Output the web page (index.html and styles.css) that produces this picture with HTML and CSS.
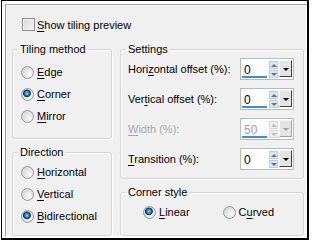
FILE: index.html
```html
<!DOCTYPE html>
<html lang="en">
<head>
    <meta charset="UTF-8">
    <title>Tiling</title>
    <link rel="stylesheet" href="styles.css">
</head>
<body>
    <div class="dialog">
        <div class="panel">
            <div class="check"><span class="box"></span><span><u>S</u>how tiling preview</span></div>

            <div class="columns">
                <div class="col">
                    <fieldset class="group tiling">
                        <legend>Tiling method</legend>
                        <div class="options">
                            <div class="radio"><span class="dot"></span><span><u>E</u>dge</span></div>
                            <div class="radio"><span class="dot on"></span><span><u>C</u>orner</span></div>
                            <div class="radio"><span class="dot"></span><span><u>M</u>irror</span></div>
                        </div>
                    </fieldset>
                    <fieldset class="group direction">
                        <legend>Direction</legend>
                        <div class="options">
                            <div class="radio"><span class="dot"></span><span><u>H</u>orizontal</span></div>
                            <div class="radio"><span class="dot"></span><span><u>V</u>ertical</span></div>
                            <div class="radio"><span class="dot on"></span><span><u>B</u>idirectional</span></div>
                        </div>
                    </fieldset>
                </div>

                <div class="col">
                    <fieldset class="group settings">
                        <legend>Settings</legend>
                        <div class="rows">
                            <div class="row">
                                <span>Hori<u>z</u>ontal offset (%):</span>
                                <div class="spin">
                                    <div class="field">0<span class="bar"></span></div>
                                    <div class="arrows"><span class="up"></span><span class="down"></span></div>
                                    <div class="drop"></div>
                                </div>
                            </div>
                            <div class="row">
                                <span>Ver<u>t</u>ical offset (%):</span>
                                <div class="spin">
                                    <div class="field">0<span class="bar"></span></div>
                                    <div class="arrows"><span class="up"></span><span class="down"></span></div>
                                    <div class="drop"></div>
                                </div>
                            </div>
                            <div class="row disabled">
                                <span><u>W</u>idth (%):</span>
                                <div class="spin">
                                    <div class="field">50<span class="bar"></span></div>
                                    <div class="arrows"><span class="up"></span><span class="down"></span></div>
                                    <div class="drop"></div>
                                </div>
                            </div>
                            <div class="row">
                                <span><u>T</u>ransition (%):</span>
                                <div class="spin">
                                    <div class="field">0</div>
                                    <div class="arrows"><span class="up"></span><span class="down"></span></div>
                                    <div class="drop"></div>
                                </div>
                            </div>
                        </div>
                    </fieldset>
                    <fieldset class="group corner">
                        <legend>Corner style</legend>
                        <div class="pair">
                            <div class="radio"><span class="dot on"></span><span><u>L</u>inear</span></div>
                            <div class="radio"><span class="dot"></span><span>C<u>u</u>rved</span></div>
                        </div>
                    </fieldset>
                </div>
            </div>
        </div>
    </div>
</body>
</html>
```

FILE: styles.css
```css
body {
    margin: 0;
    background: #fff;
    font-family: "Liberation Sans", Arial, sans-serif;
    font-size: 11px;
    color: #000;
}
u {
    text-underline-offset: 2px;
}
.dialog {
    margin-left: 1px;
    width: 308px;
    height: 240px;
    box-sizing: border-box;
    border: solid #000;
    border-width: 1px 2px 2px 1px;
    padding: 3px 0 1px 3px;
    background: #fff;
}
.panel {
    height: 100%;
    box-sizing: border-box;
    border: 1px solid;
    border-color: #a0a0a0 #fff #fff #a0a0a0;
    background: #f0f0f0;
    padding: 13px 0 0 6px;
}
.check {
    display: flex;
    align-items: center;
    gap: 2px;
    margin-left: 10px;
    height: 13px;
}
.box {
    flex: none;
    width: 11px;
    height: 11px;
    border: 1px solid #8f8f8f;
    background: linear-gradient(135deg, #d6d6d6, #f8f8f8);
    box-shadow: inset 0 0 0 1px #f4f4f4;
}
.columns {
    display: grid;
    grid-template-columns: 100px 184px;
    column-gap: 8px;
    margin-top: 11px;
}
.col {
    display: flex;
    flex-direction: column;
}
.group {
    margin: 0;
    padding: 0;
    border: 1px solid #d5d5d5;
    border-radius: 3px;
    box-shadow: inset 1px 1px 0 #fff, 1px 1px 0 #fff;
    box-sizing: border-box;
}
.group legend {
    margin-left: 5px;
    padding: 0 2px;
    line-height: 14px;
}
.tiling {
    height: 97px;
}
.direction {
    height: 91px;
    margin-top: 6px;
}
.settings {
    height: 137px;
}
.corner {
    height: 51px;
    margin-top: 6px;
}
.options {
    padding: 5px 0 0 8px;
}
.direction .options {
    padding-top: 2px;
}
.radio {
    display: flex;
    align-items: center;
    gap: 3px;
    height: 22px;
}
.dot {
    flex: none;
    width: 11px;
    height: 11px;
    border-radius: 50%;
    border: 1px solid #9a9a9a;
    background: radial-gradient(circle at 65% 65%, #fafafa, #d4d4d4 80%);
}
.dot.on {
    background:
        radial-gradient(circle at 45% 40%, #8fd3f4 0, #2a86c0 2px, #0e4a78 3px, #1b3f5c 3.6px, transparent 4.2px),
        radial-gradient(circle at 65% 65%, #fafafa, #d4d4d4 80%);
}
.rows {
    display: flex;
    flex-direction: column;
    gap: 8px;
    padding: 2px 9px 0 7px;
}
.row {
    display: flex;
    align-items: center;
    justify-content: space-between;
    height: 22px;
}
.row.disabled {
    color: #a7a7a7;
}
.spin {
    display: flex;
    width: 54px;
    height: 22px;
    box-sizing: border-box;
    border: 1px solid #b7bcc2;
    background: #fff;
}
.field {
    position: relative;
    flex: 1;
    padding: 4px 0 0 3px;
    font-size: 12px;
}
.bar {
    position: absolute;
    left: 1px;
    right: 2px;
    bottom: 1px;
    height: 2px;
    background: #3c8fe0;
}
.arrows {
    display: flex;
    flex-direction: column;
    justify-content: center;
    gap: 1px;
    width: 9px;
    margin-right: 1px;
}
.arrows span {
    height: 6px;
    border: 1px solid #c3cbd3;
    background: #dbe8f4;
    position: relative;
}
.arrows .up::after,
.arrows .down::after {
    content: "";
    position: absolute;
    left: 1px;
    border: 3px solid transparent;
}
.arrows .up::after {
    top: -1px;
    border-bottom: 3px solid #4a78a8;
}
.arrows .down::after {
    top: 2px;
    border-top: 3px solid #4a78a8;
}
.drop {
    position: relative;
    width: 11px;
    margin: 1px 1px 2px 0;
    border: 1px solid;
    border-color: #f4f4f4 #404040 #404040 #f4f4f4;
    background: #e4e4e4;
}
.drop::after {
    content: "";
    position: absolute;
    left: 3px;
    top: 7px;
    border: 3px solid transparent;
    border-top: 3px solid #000;
}
.disabled .field {
    color: #a0a0a0;
}
.disabled .arrows span {
    background: #eef0f2;
    border-color: #d6d9dc;
}
.disabled .arrows .up::after {
    border-bottom-color: #b8b8b8;
}
.disabled .arrows .down::after {
    border-top-color: #b8b8b8;
}
.disabled .drop {
    border-color: #f4f4f4 #a0a0a0 #a0a0a0 #f4f4f4;
}
.disabled .drop::after {
    border-top-color: #a0a0a0;
}
.pair {
    display: flex;
    padding: 2px 0 0 22px;
    gap: 33px;
}
```
